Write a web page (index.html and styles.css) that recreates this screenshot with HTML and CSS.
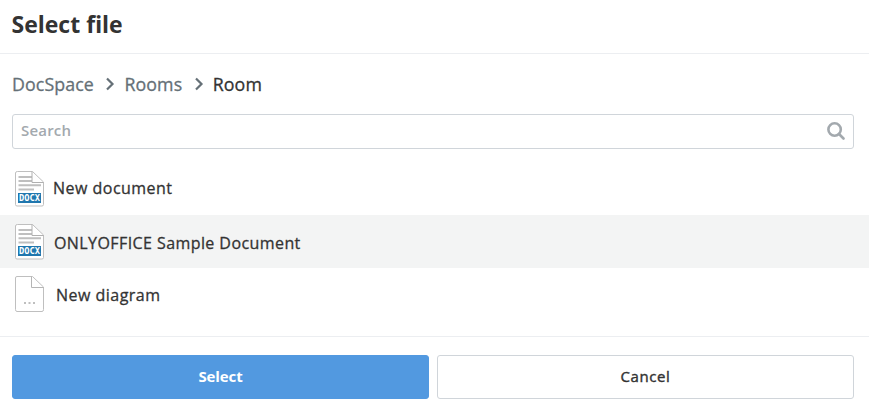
FILE: index.html
```html
<!DOCTYPE html>
<html lang="en">
<head>
<meta charset="utf-8">
<title>Select file</title>
<link rel="stylesheet" href="styles.css">
</head>
<body>
<main class="dialog">
  <header class="header"><h1 class="title">Select file</h1></header>
  <nav class="crumbs">
    <a class="crumb">DocSpace</a>
    <svg class="chevron" viewBox="0 0 10 14"><path d="M2 1.500L7.500 7L2 12.500"/></svg>
    <a class="crumb">Rooms</a>
    <svg class="chevron" viewBox="0 0 10 14"><path d="M2 1.500L7.500 7L2 12.500"/></svg>
    <span class="crumb current">Room</span>
  </nav>
  <div class="search">
    <span class="placeholder">Search</span>
    <svg class="magnifier" viewBox="0 0 18 18"><circle cx="7.600" cy="7.500" r="6.200"/><path d="M12 12L16.500 16.500"/></svg>
  </div>
  <ul class="files">
    <li class="file first">
      <svg class="icon" viewBox="0 0 30 36">
        <path d="M2.500 .5H17.500L28.500 11V33.500Q28.500 35 27 35H2Q.5 35 .5 33.500V2Q.5 .5 2.500 .5Z" fill="#fff" stroke="#bfbfbf"/>
        <path d="M3.500 6H17M3.500 10H17M3.500 14.200H26M3.500 18.500H19" stroke="#bfbfbf" stroke-width="2"/>
        <path d="M17 .5V11.500H28.500" fill="none" stroke="#b0b0b0"/>
        <rect x="3" y="22" width="23" height="10" fill="#2077ae"/>
        <text class="tag" x="4" y="30" textLength="21" lengthAdjust="spacingAndGlyphs">DOCX</text>
      </svg>
      <span class="name">New document</span>
    </li>
    <li class="file selected">
      <svg class="icon" viewBox="0 0 30 36">
        <path d="M2.500 .5H17.500L28.500 11V33.500Q28.500 35 27 35H2Q.5 35 .5 33.500V2Q.5 .5 2.500 .5Z" fill="#fff" stroke="#bfbfbf"/>
        <path d="M3.500 6H17M3.500 10H17M3.500 14.200H26M3.500 18.500H19" stroke="#bfbfbf" stroke-width="2"/>
        <path d="M17 .5V11.500H28.500" fill="none" stroke="#b0b0b0"/>
        <rect x="3" y="22" width="23" height="10" fill="#2077ae"/>
        <text class="tag" x="4" y="30" textLength="21" lengthAdjust="spacingAndGlyphs">DOCX</text>
      </svg>
      <span class="name">ONLYOFFICE Sample Document</span>
    </li>
    <li class="file last">
      <svg class="icon" viewBox="0 0 30 36">
        <path d="M2 .5H17.500L28.500 11V33.500Q28.500 35.500 27 35.500H2Q.5 35.500 .5 33.500V2Q.5 .5 2 .5Z" fill="#fff" stroke="#bfbfbf"/>
        <path d="M16.500 .5V11.500H28.500" fill="none" stroke="#b5b5b5"/>
        <path d="M9 27H11M13.500 27H15.500M18 27H20" stroke="#bfbfbf" stroke-width="2"/>
      </svg>
      <span class="name">New diagram</span>
    </li>
  </ul>
  <footer class="footer">
    <button class="button primary">Select</button>
    <button class="button secondary">Cancel</button>
  </footer>
</main>
</body>
</html>
```
FILE: styles.css
```css
* { box-sizing: border-box; }
body { margin: 0; background: #fff; color: #333; font-family: "Open Sans", sans-serif; }
.dialog { height: 412px; overflow: hidden; display: flex; flex-direction: column; }
.header { height: 54px; border-bottom: 1px solid #eceef1; padding: 8px 11.5px; }
.title { margin: 0; font-size: 23px; line-height: 32px; font-weight: 700; }
.crumbs { height: 60px; padding: 0 12px; display: flex; align-items: center; font-size: 17.8px; letter-spacing: .1px; -webkit-text-stroke: .3px; }
.crumb { color: #657077; line-height: 24px; }
.current { color: #333; }
.chevron { width: 10px; height: 14px; margin: 0 9px 0 11.5px; fill: none; stroke: #657077; stroke-width: 2.2; }
.search { height: 35px; margin: 0 15px 0 12px; padding: 0 8px; border: 1px solid #d0d5da; border-radius: 3px; display: flex; align-items: center; justify-content: space-between; }
.placeholder { color: #a3a9ae; font-size: 15px; line-height: 20px; font-weight: 600; padding-bottom: 3px; letter-spacing: .2px; }
.magnifier { width: 18px; height: 18px; margin-bottom: 2px; fill: none; stroke: #a3a9ae; stroke-width: 2.6; stroke-linecap: round; }
.files { list-style: none; margin: 13px 0 0; padding: 0; height: 174px; }
.file { height: 53px; padding-left: 15px; display: flex; align-items: center; font-size: 16px; }
.selected { background: #f3f4f4; }
.icon { width: 30px; height: 36px; flex: none; }
.name { letter-spacing: .48px; -webkit-text-stroke: .3px; }
.first .name { margin-left: 8px; padding-bottom: 2px; }
.selected .name { margin-left: 9px; padding-top: 2px; letter-spacing: .42px; }
.last .icon { margin-bottom: 2px; }
.last .name { margin-left: 11px; }
.tag { font: 700 8px "DejaVu Sans Mono", monospace; fill: #fff; }
.footer { height: 76px; border-top: 1px solid #eceef1; padding: 18px 15px 13px 12px; display: flex; gap: 8px; }
.button { flex: 1; height: 44px; padding: 0 0 2px; border: 1px solid #d0d5da; border-radius: 3px; background: #fff; color: #333; font: 600 15px/20px "Open Sans", sans-serif; }
.primary { background: #5299e0; border-color: #5299e0; color: #fff; font-weight: 700; letter-spacing: -.1px; }
.secondary { font-weight: 400; letter-spacing: .6px; -webkit-text-stroke: .4px; }
```
